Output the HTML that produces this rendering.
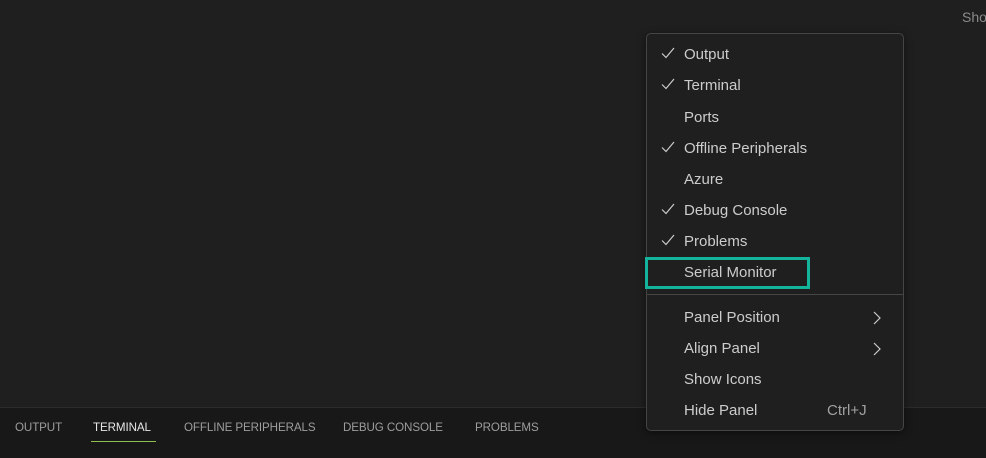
<!DOCTYPE html>
<html><head><style>
body{margin:0;width:986px;height:457px;background:#1f1f1f;overflow:hidden;position:relative;font-family:"Segoe UI","Liberation Sans",sans-serif;}
.bottom{position:absolute;left:0;top:407px;width:986px;height:50px;background:#181818;border-top:1px solid #2b2b2b;}
.tab{position:absolute;top:13px;font-size:11.6px;color:#9d9d9d;letter-spacing:-0.1px;}
.tab.act{color:#e7e7e7;}
.ul{position:absolute;left:91px;top:33px;width:65px;height:1px;background:#8fbf4f;}
.sho{position:absolute;left:962px;top:9px;font-size:14px;color:#8a8a8a;}
.menu{position:absolute;left:646px;top:33px;width:256px;height:396px;background:#1f1f1f;border:1px solid #454545;border-radius:5px;box-shadow:0 2px 8px rgba(0,0,0,.5);}
.it{position:absolute;left:37px;font-size:15px;color:#cccccc;line-height:20px;}
.ck{position:absolute;left:14px;}
.sep{position:absolute;left:0;top:260px;width:256px;height:1px;background:#454545;}
.hl{position:absolute;left:645px;top:257px;width:159px;height:26px;border:3px solid #14b39b;}
.chev{position:absolute;left:226px;}
.sc{position:absolute;left:180px;font-size:15px;color:#a0a0a0;line-height:20px;}
</style></head><body>
<div class="sho">Sho</div>
<div class="bottom">
<span class="tab" style="left:15px">OUTPUT</span>
<span class="tab act" style="left:93px">TERMINAL</span>
<span class="tab" style="left:184px">OFFLINE PERIPHERALS</span>
<span class="tab" style="left:343px">DEBUG CONSOLE</span>
<span class="tab" style="left:475px">PROBLEMS</span>
<div class="ul"></div>
</div>
<div class="menu">
<svg class="ck" style="top:13px" width="14" height="12" viewBox="0 0 14 12"><path d="M1 6.5l4 4L13 1" fill="none" stroke="#ccc" stroke-width="1.2"/></svg>
<div class="it" style="top:11px">Output</div>
<svg class="ck" style="top:44px" width="14" height="12" viewBox="0 0 14 12"><path d="M1 6.5l4 4L13 1" fill="none" stroke="#ccc" stroke-width="1.2"/></svg>
<div class="it" style="top:42px">Terminal</div>
<div class="it" style="top:74px">Ports</div>
<svg class="ck" style="top:107px" width="14" height="12" viewBox="0 0 14 12"><path d="M1 6.5l4 4L13 1" fill="none" stroke="#ccc" stroke-width="1.2"/></svg>
<div class="it" style="top:105px">Offline Peripherals</div>
<div class="it" style="top:136px">Azure</div>
<svg class="ck" style="top:169px" width="14" height="12" viewBox="0 0 14 12"><path d="M1 6.5l4 4L13 1" fill="none" stroke="#ccc" stroke-width="1.2"/></svg>
<div class="it" style="top:167px">Debug Console</div>
<svg class="ck" style="top:200px" width="14" height="12" viewBox="0 0 14 12"><path d="M1 6.5l4 4L13 1" fill="none" stroke="#ccc" stroke-width="1.2"/></svg>
<div class="it" style="top:198px">Problems</div>
<div class="it" style="top:229px">Serial Monitor</div>
<div class="sep"></div>
<div class="it" style="top:274px">Panel Position</div>
<svg class="chev" style="top:277px" width="8" height="14" viewBox="0 0 8 14"><path d="M1 1l6 6-6 6" fill="none" stroke="#ccc" stroke-width="1.2"/></svg>
<div class="it" style="top:305px">Align Panel</div>
<svg class="chev" style="top:308px" width="8" height="14" viewBox="0 0 8 14"><path d="M1 1l6 6-6 6" fill="none" stroke="#ccc" stroke-width="1.2"/></svg>
<div class="it" style="top:336px">Show Icons</div>
<div class="it" style="top:367px">Hide Panel</div>
<div class="sc" style="top:367px">Ctrl+J</div>
</div>
<div class="hl"></div>
</body></html>
